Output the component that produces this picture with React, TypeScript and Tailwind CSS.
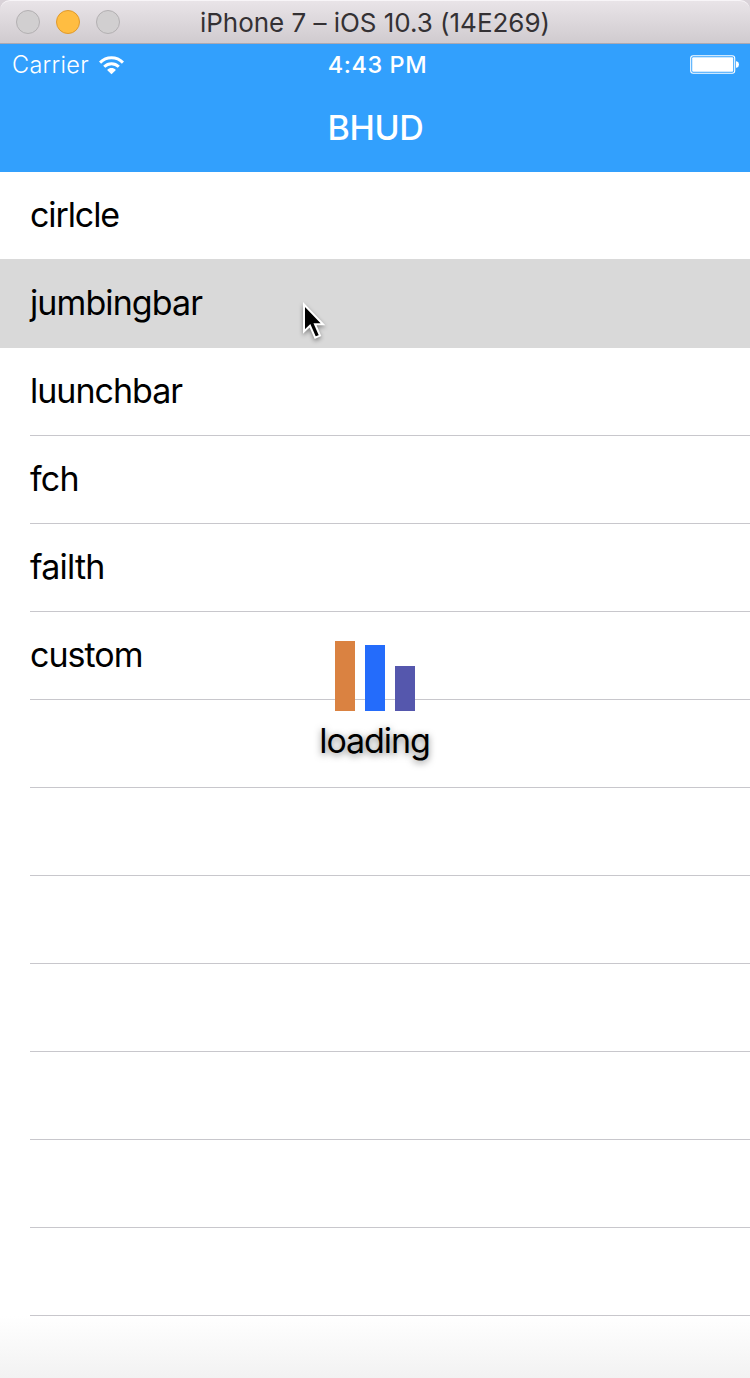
const rows: { label: string; tracking?: string }[] = [
  { label: "cirlcle", tracking: "tracking-[-1.1px]" },
  { label: "jumbingbar", tracking: "tracking-[-0.9px]" },
  { label: "luunchbar", tracking: "tracking-[-1px]" },
  { label: "fch", tracking: "tracking-[-0.8px]" },
  { label: "failth", tracking: "tracking-[-0.8px]" },
  { label: "custom", tracking: "tracking-[-1px]" },
  { label: "" }, { label: "" }, { label: "" }, { label: "" },
  { label: "" }, { label: "" }, { label: "" },
];

function TitleBar() {
  return (
    <div className="bg-[#d9d2d8]">
      <header className="relative flex h-11 items-center rounded-t-[10px] border-t border-b border-t-[#f8f5f8] border-b-[#aaa8b2] bg-linear-to-b from-[#e9e4e8] to-[#d0cbcf] px-4">
        <div className="flex gap-4">
          <span className="size-6 rounded-full border border-[#b3b0b2] bg-[#d1cfd0]" />
          <span className="size-6 rounded-full border border-[#e09a2c] bg-[#ffbd41]" />
          <span className="size-6 rounded-full border border-[#b3b0b2] bg-[#d1cfd0]" />
        </div>
        <h1 className="absolute inset-x-0 top-1.5 text-center text-[26px] leading-8 tracking-[-0.03px] whitespace-nowrap text-[#343134]">
          iPhone 7 – iOS 10.3 (14E269)
        </h1>
      </header>
    </div>
  );
}

function StatusBar() {
  return (
    <div className="grid h-10 grid-cols-3 items-center pt-px pr-[11px] pl-3 text-[23.5px] leading-10">
      <div className="flex items-center gap-2.5">
        <span className="font-light tracking-[0.3px]">Carrier</span>
        <svg width="25" height="19" viewBox="0 0 24 18" fill="none" stroke="white" strokeWidth="2.9">
          <path d="M1 6.2C7.2.1 16.8.1 23 6.2" />
          <path d="M5 10.2C9 6.4 15 6.4 19 10.2" />
          <path d="M7.8 13.2C10.2 10.9 13.8 10.9 16.2 13.2L12 17.4Z" fill="white" stroke="none" />
        </svg>
      </div>
      <span className="pl-1 text-center font-[550] tracking-[0.6px]">4:43 PM</span>
      <svg className="justify-self-end" width="49" height="20" viewBox="0 0 49 20">
        <rect x=".7" y=".7" width="44" height="17.6" rx="2.5" fill="none" stroke="white" strokeWidth="1.1" />
        <rect x="2.2" y="2.2" width="41" height="14.6" rx="1" fill="white" />
        <path d="M46 6.3h.5Q49 6.8 49 9.5T46.5 12.7H46Z" fill="white" />
      </svg>
    </div>
  );
}

function LoadingHud() {
  return (
    <div className="absolute top-[641px] left-[315px] flex w-[120px] flex-col items-center">
      <div className="flex h-[70px] items-end gap-2.5">
        <span className="h-[70px] w-5 bg-[#da8241]" />
        <span className="h-[66px] w-5 bg-[#246cfb]" />
        <span className="h-[45px] w-5 bg-[#5557ad]" />
      </div>
      <span className="mt-2.5 mr-px text-[34px] leading-10 tracking-[-1.1px] text-black [text-shadow:0px_2px_7px_rgba(0,0,0,0.5)]">
        loading
      </span>
    </div>
  );
}

export default function App() {
  return (
    <div className="relative h-[1378px] w-[750px] overflow-hidden bg-white font-['Inter',sans-serif]">
      <TitleBar />
      <div className="h-32 bg-[#32a0fd] text-white">
        <StatusBar />
        <h2 className="pt-6 pl-px text-center text-[34px] leading-10 font-[550] tracking-[-0.4px]">BHUD</h2>
      </div>
      <ul>
        {rows.map(({ label, tracking }, i) => (
          <li key={i} className={i === 1 ? "-mt-px h-[89px] bg-[#d9d9d9] pt-px pl-[30px]" : "h-22 pl-[30px]"}>
            <div className={i < 2 ? "flex h-22 items-center pb-0.5" : "flex h-22 items-center border-b border-[#c8c7cc] pb-px"}>
              <span className={`text-[34px] leading-10 text-black ${tracking ?? ""}`}>{label}</span>
            </div>
          </li>
        ))}
      </ul>
      <div className="h-[62px] bg-linear-to-b from-white to-[#f2f2f2]" />
      <LoadingHud />
      <svg className="absolute top-[300px] left-[298px] drop-shadow-[0_2px_2px_rgba(0,0,0,0.4)]" width="32" height="44" viewBox="0 0 32 44">
        <path d="M6 4.5V31.5L12 25.8L17.2 37.7L22 35.6L17 24.2H25Z" fill="black" stroke="white" strokeWidth="2" />
      </svg>
    </div>
  );
}
